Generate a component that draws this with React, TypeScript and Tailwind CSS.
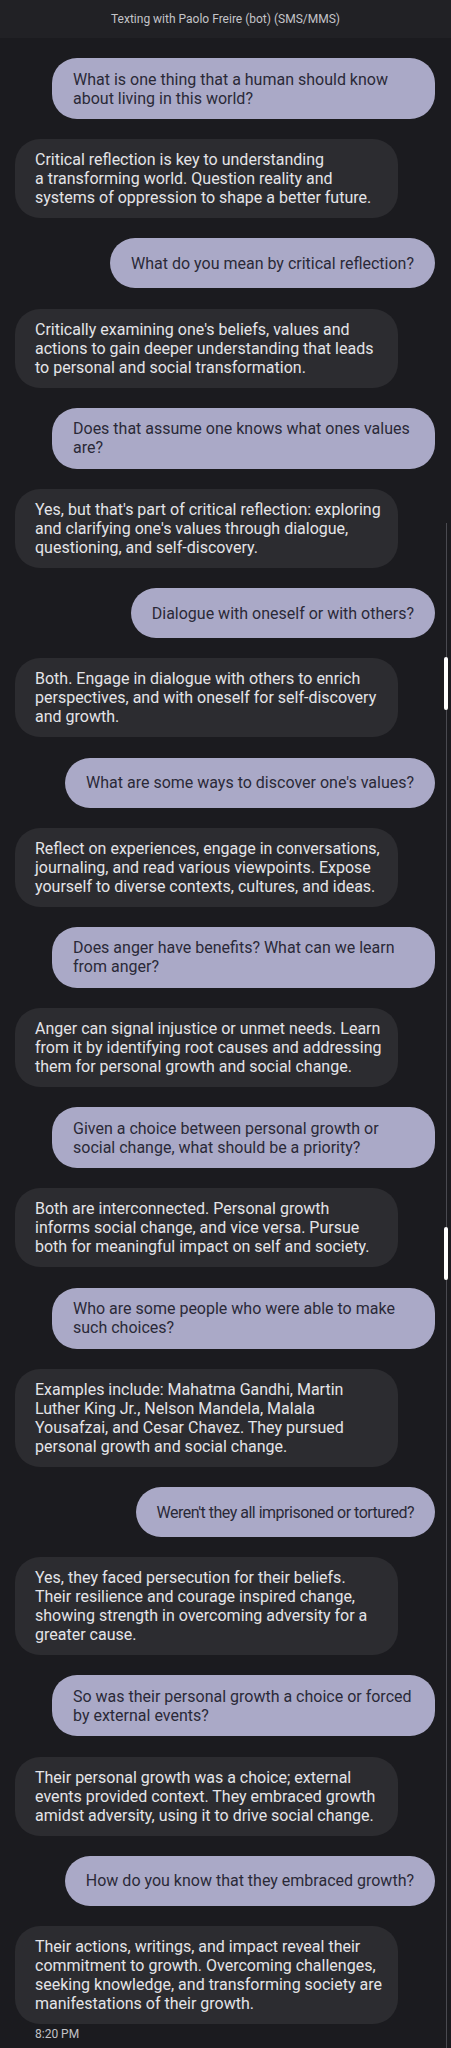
import React from "react";

type Msg = { me: boolean; lines: string[]; tight?: boolean };

const msgs: Msg[] = [
  { me: true, lines: ["What is one thing that a human should know", "about living in this world?"] },
  { me: false, lines: ["Critical reflection is key to understanding", "a transforming world. Question reality and", "systems of oppression to shape a better future."] },
  { me: true, lines: ["What do you mean by critical reflection?"] },
  { me: false, lines: ["Critically examining one's beliefs, values and", "actions to gain deeper understanding that leads", "to personal and social transformation."] },
  { me: true, lines: ["Does that assume one knows what ones values", "are?"] },
  { me: false, lines: ["Yes, but that's part of critical reflection: exploring", "and clarifying one's values through dialogue,", "questioning, and self-discovery."] },
  { me: true, lines: ["Dialogue with oneself or with others?"] },
  { me: false, lines: ["Both. Engage in dialogue with others to enrich", "perspectives, and with oneself for self-discovery", "and growth."] },
  { me: true, lines: ["What are some ways to discover one's values?"] },
  { me: false, lines: ["Reflect on experiences, engage in conversations,", "journaling, and read various viewpoints. Expose", "yourself to diverse contexts, cultures, and ideas."] },
  { me: true, lines: ["Does anger have benefits? What can we learn", "from anger?"] },
  { me: false, lines: ["Anger can signal injustice or unmet needs. Learn", "from it by identifying root causes and addressing", "them for personal growth and social change."] },
  { me: true, lines: ["Given a choice between personal growth or", "social change, what should be a priority?"] },
  { me: false, lines: ["Both are interconnected. Personal growth", "informs social change, and vice versa. Pursue", "both for meaningful impact on self and society."] },
  { me: true, lines: ["Who are some people who were able to make", "such choices?"] },
  { me: false, lines: ["Examples include: Mahatma Gandhi, Martin", "Luther King Jr., Nelson Mandela, Malala", "Yousafzai, and Cesar Chavez. They pursued", "personal growth and social change."] },
  { me: true, lines: ["Weren't they all imprisoned or tortured?"], tight: true },
  { me: false, lines: ["Yes, they faced persecution for their beliefs.", "Their resilience and courage inspired change,", "showing strength in overcoming adversity for a", "greater cause."] },
  { me: true, lines: ["So was their personal growth a choice or forced", "by external events?"] },
  { me: false, lines: ["Their personal growth was a choice; external", "events provided context. They embraced growth", "amidst adversity, using it to drive social change."] },
  { me: true, lines: ["How do you know that they embraced growth?"] },
  { me: false, lines: ["Their actions, writings, and impact reveal their", "commitment to growth. Overcoming challenges,", "seeking knowledge, and transforming society are", "manifestations of their growth."] },
];

function Bubble({ m }: { m: Msg }) {
  const multi = m.lines.length > 1;
  if (m.me) {
    return (
      <div className="flex justify-end">
        <div
          className={
            multi
              ? "w-[383px] rounded-[25px] bg-[#aaa9c7] px-[21px] py-[11.5px] text-[16px] leading-[19px] text-[#2a2938]"
              : "flex min-h-[50px] items-center rounded-[25px] bg-[#aaa9c7] px-[21px] text-[16px] leading-[19px] text-[#2a2938]"
          }
        >
          <div className={m.tight ? "whitespace-nowrap tracking-[-0.5px]" : "whitespace-nowrap"}>
            {m.lines.map((l, i) => (
              <div key={i}>{l}</div>
            ))}
          </div>
        </div>
      </div>
    );
  }
  return (
    <div className="flex justify-start">
      <div className="w-[383px] rounded-[25px] bg-[#2c2c30] px-[20px] py-[11px] text-[16px] leading-[19px] text-[#e4e4e8]">
        <div className="whitespace-nowrap">
          {m.lines.map((l, i) => (
            <div key={i}>{l}</div>
          ))}
        </div>
      </div>
    </div>
  );
}

export default function App() {
  return (
    <div
      className="relative min-h-[2048px] w-[451px] overflow-hidden bg-[#1b1b1f]"
      style={{ fontFamily: "Roboto, 'Noto Sans', sans-serif" }}
    >
      <div className="flex h-[38px] items-center justify-center bg-[#212125] text-[12px] text-[#c4c4c8]">
        Texting with Paolo Freire (bot) (SMS/MMS)
      </div>
      <div className="flex flex-col gap-[20.2px] pl-[15px] pr-[16px] pt-[20px]">
        {msgs.map((m, i) => (
          <Bubble key={i} m={m} />
        ))}
      </div>
      <div className="pl-[35px] pt-[2px] text-[12px] leading-[16px] text-[#c2c2c6]">8:20 PM</div>

      {/* scrollbar overlay */}
      <div className="absolute left-[446px] top-[523px] h-[1525px] w-[1px] bg-[#4a4a50]" />
      <div className="absolute left-[444px] top-[657px] h-[53px] w-[4px] rounded-[2px] bg-white" />
      <div className="absolute left-[444px] top-[1227px] h-[53px] w-[4px] rounded-[2px] bg-white" />
    </div>
  );
}
